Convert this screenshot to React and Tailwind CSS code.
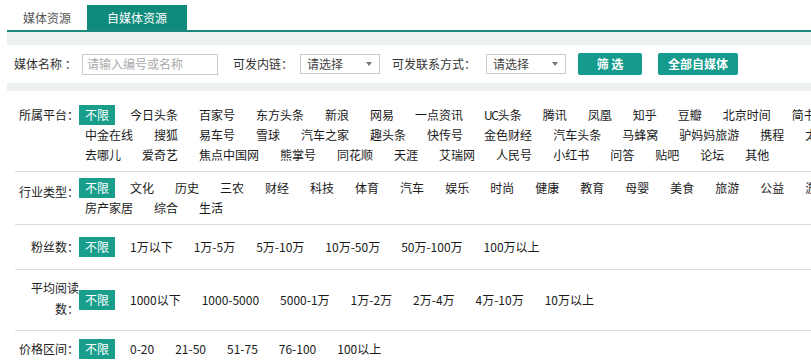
import React from "react";

const platforms = [
  "不限","今日头条","百家号","东方头条","新浪","网易","一点资讯","UC头条","腾讯","凤凰","知乎","豆瓣","北京时间","简书",
  "中金在线","搜狐","易车号","雪球","汽车之家","趣头条","快传号","金色财经","汽车头条","马蜂窝","驴妈妈旅游","携程","太平洋号",
  "去哪儿","爱奇艺","焦点中国网","熊掌号","同花顺","天涯","艾瑞网","人民号","小红书","问答","贴吧","论坛","其他",
];
const industries = ["不限","文化","历史","三农","财经","科技","体育","汽车","娱乐","时尚","健康","教育","母婴","美食","旅游","公益","游戏","房产家居","综合","生活"];
const fans = ["不限","1万以下","1万-5万","5万-10万","10万-50万","50万-100万","100万以上"];
const reads = ["不限","1000以下","1000-5000","5000-1万","1万-2万","2万-4万","4万-10万","10万以上"];
const prices = ["不限","0-20","21-50","51-75","76-100","100以上"];

function Items({ list, className = "" }) {
  return (
    <div className={"flex flex-1 flex-wrap " + className}>
      {list.map((t, i) => (
        <span
          key={t}
          className={
            "h-[20px] px-[6px] mr-[9px] text-[12px] leading-[20px] whitespace-nowrap " +
            (i === 0 ? "bg-[#189e8b] text-white" : "text-[#1a1a1a]")
          }
        >
          {t === "UC头条" ? (
            <>
              <span className="tracking-[-1.4px]">UC</span>头条
            </>
          ) : (
            t
          )}
        </span>
      ))}
    </div>
  );
}

function Select({ className = "" }) {
  return (
    <div className={"flex h-[20px] w-[80px] items-center justify-between border border-[#c8c8c8] bg-white pl-[6px] pr-[7px] " + className}>
      <span className="text-[12px] leading-[18px] text-[#444]">请选择</span>
      <span className="h-0 w-0 border-x-[3px] border-t-[4px] border-x-transparent border-t-[#777]" />
    </div>
  );
}

export default function App() {
  return (
    <div className="h-[364px] w-full overflow-hidden bg-white font-['Noto_Sans_CJK_SC',sans-serif]">
      <div className="w-[880px]">
        {/* tabs */}
        <div className="flex h-[30px] items-end pl-[7px]">
          <div className="flex h-[25px] w-[80px] items-center justify-center text-[12px] text-[#555]">媒体资源</div>
          <div className="flex h-[25px] w-[100px] items-center justify-center bg-[#0f8a7b] text-[12px] text-white">自媒体资源</div>
        </div>
        <div className="ml-[7px] h-[2px] bg-[#1a8a7c]" />

        {/* search */}
        <div className="ml-[7px] bg-[#eef1f1] pt-[13px] pb-[8px]">
          <div className="flex h-[38px] items-center bg-white pl-[7px] text-[12px] text-[#333]">
            <span className="w-[68px]">媒体名称 ：</span>
            <div className="flex h-[21px] w-[136px] items-center border border-[#c8c8c8] pl-[4px] text-[12px] text-[#aaa]">
              请输入编号或名称
            </div>
            <span className="ml-[15px] w-[67px]">可发内链：</span>
            <Select />
            <span className="ml-[12px] w-[94px]">可发联系方式：</span>
            <Select />
            <button className="ml-[12px] flex h-[22px] w-[64px] items-center justify-center rounded-[2px] bg-[#149b8b] text-[12px] font-bold text-white">
              筛&nbsp;选
            </button>
            <button className="ml-[16px] flex h-[22px] w-[80px] items-center justify-center rounded-[2px] bg-[#149b8b] text-[12px] font-bold text-white">
              全部自媒体
            </button>
          </div>
        </div>

        {/* filters */}
        <div className="ml-[15px]">
          <div className="flex items-start border-b border-[#dcdcdc] pt-[14px] pb-[6px]">
            <div className="w-[64px] shrink-0 text-right text-[12px] leading-[20px] text-[#222]">所属平台：</div>
            <Items list={platforms} />
          </div>
          <div className="flex items-start border-b border-[#dcdcdc] pt-[6px] pb-[6px]">
            <div className="mt-[4px] w-[64px] shrink-0 text-right text-[12px] leading-[20px] text-[#222]">行业类型：</div>
            <Items list={industries} />
          </div>
          <div className="flex items-start border-b border-[#dcdcdc] pt-[12px] pb-[12px]">
            <div className="w-[64px] shrink-0 text-right text-[12px] leading-[20px] text-[#222]">粉丝数：</div>
            <Items list={fans} />
          </div>
          <div className="flex items-start border-b border-[#dcdcdc] pt-[7px] pb-[11px]">
            <div className="w-[64px] shrink-0 text-right text-[12px] leading-[21px] text-[#222]">平均阅读数：</div>
            <Items list={reads} className="mt-[13px]" />
          </div>
          <div className="flex items-start pt-[8px] pb-[8px]">
            <div className="w-[64px] shrink-0 text-right text-[12px] leading-[20px] text-[#222]">价格区间：</div>
            <Items list={prices} />
          </div>
        </div>
      </div>
    </div>
  );
}
